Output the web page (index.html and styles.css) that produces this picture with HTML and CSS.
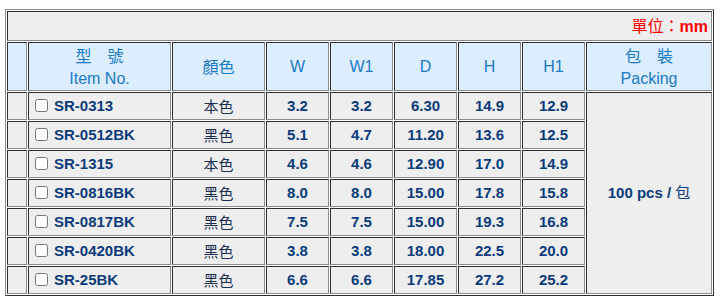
FILE: index.html
```html
<!DOCTYPE html>
<html lang="zh-Hant">
<head>
<meta charset="utf-8">
<title>SR spec</title>
<link rel="stylesheet" href="styles.css">
</head>
<body>
<table class="spec">
  <colgroup>
    <col class="c-blank">
    <col class="c-item">
    <col class="c-color">
    <col class="c-num">
    <col class="c-num">
    <col class="c-num">
    <col class="c-num">
    <col class="c-num">
    <col class="c-pack">
  </colgroup>
  <tr class="title">
    <td colspan="9"><span class="cjk">單位：</span><b>mm</b></td>
  </tr>
  <tr class="head">
    <th></th>
    <th><span class="cjk">型　號</span><br>Item No.</th>
    <th><span class="cjk">顏色</span></th>
    <th>W</th>
    <th>W1</th>
    <th>D</th>
    <th>H</th>
    <th>H1</th>
    <th><span class="cjk">包　裝</span><br>Packing</th>
  </tr>
  <tr class="row">
    <td></td>
    <td class="item"><input type="checkbox" class="chk">SR-0313</td>
    <td class="color">本色</td>
    <td>3.2</td><td>3.2</td><td>6.30</td><td>14.9</td><td>12.9</td>
    <td class="pack" rowspan="7">100 pcs / <span class="cjk">包</span></td>
  </tr>
  <tr class="row">
    <td></td>
    <td class="item"><input type="checkbox" class="chk">SR-0512BK</td>
    <td class="color">黑色</td>
    <td>5.1</td><td>4.7</td><td>11.20</td><td>13.6</td><td>12.5</td>
  </tr>
  <tr class="row">
    <td></td>
    <td class="item"><input type="checkbox" class="chk">SR-1315</td>
    <td class="color">本色</td>
    <td>4.6</td><td>4.6</td><td>12.90</td><td>17.0</td><td>14.9</td>
  </tr>
  <tr class="row">
    <td></td>
    <td class="item"><input type="checkbox" class="chk">SR-0816BK</td>
    <td class="color">黑色</td>
    <td>8.0</td><td>8.0</td><td>15.00</td><td>17.8</td><td>15.8</td>
  </tr>
  <tr class="row">
    <td></td>
    <td class="item"><input type="checkbox" class="chk">SR-0817BK</td>
    <td class="color">黑色</td>
    <td>7.5</td><td>7.5</td><td>15.00</td><td>19.3</td><td>16.8</td>
  </tr>
  <tr class="row">
    <td></td>
    <td class="item"><input type="checkbox" class="chk">SR-0420BK</td>
    <td class="color">黑色</td>
    <td>3.8</td><td>3.8</td><td>18.00</td><td>22.5</td><td>20.0</td>
  </tr>
  <tr class="row">
    <td></td>
    <td class="item"><input type="checkbox" class="chk">SR-25BK</td>
    <td class="color">黑色</td>
    <td>6.6</td><td>6.6</td><td>17.85</td><td>27.2</td><td>25.2</td>
  </tr>
</table>
</body>
</html>
```

FILE: styles.css
```css
body {
  margin: 0;
  padding: 9px 0 0 5px;
  background: #ffffff;
  font-family: "Liberation Sans", Arial, "Noto Sans CJK TC", sans-serif;
}

.spec {
  border-collapse: separate;
  border-spacing: 1px;
  border: 1px solid;
  border-color: #8c8c8c #2e2e2e #2e2e2e #8c8c8c;
  table-layout: fixed;
  width: 709px;
  background: #ffffff;
}

.c-blank { width: 20px; }
.c-item { width: 143px; }
.c-color { width: 93px; }
.c-num { width: 63px; }
.c-pack { width: 126px; }

.spec td,
.spec th {
  box-sizing: border-box;
  border: 1px solid;
  border-color: #2e2e2e #8c8c8c #8c8c8c #2e2e2e;
  padding: 0;
  text-align: center;
  vertical-align: middle;
}

.cjk {
  font-family: "Noto Sans CJK TC", sans-serif;
  font-weight: normal;
}

.title td {
  height: 30px;
  background: #eeeeee;
  text-align: right;
  padding-right: 3px;
  color: #ff0000;
  font-size: 16px;
  line-height: 20px;
}

.title b {
  font-weight: bold;
}

.head th {
  height: 49px;
  background: #dcedfd;
  color: #1a7ac6;
  font-size: 16px;
  font-weight: normal;
  line-height: 22px;
}

.row td {
  height: 28px;
  background: #eeeeee;
  color: #0b3b7a;
  font-size: 15px;
  font-weight: bold;
  line-height: 18px;
}

.row td.item {
  text-align: left;
  padding-left: 6px;
  white-space: nowrap;
}

.chk {
  width: 13px;
  height: 13px;
  margin: 0 6px 0 0;
  vertical-align: -1px;
}

.row td.color {
  font-family: "Noto Sans CJK TC", sans-serif;
  font-weight: normal;
  color: #1c2f52;
}

.row td.pack {
  padding-bottom: 2px;
}
```
